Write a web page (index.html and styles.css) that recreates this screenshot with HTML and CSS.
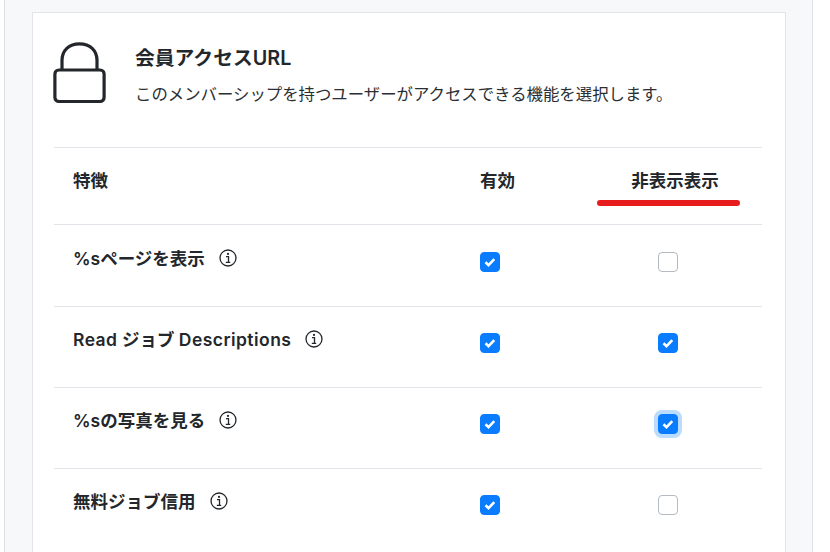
FILE: index.html
```html
<!DOCTYPE html>
<html lang="ja">
<head>
<meta charset="utf-8">
<title>会員アクセスURL</title>
<link rel="stylesheet" href="styles.css">
</head>
<body>
<div class="panel">
  <section class="card">
    <header class="head">
      <svg class="lock" width="54" height="62" viewBox="0 0 54 62" fill="none" stroke="#23272b" stroke-width="3.2">
        <path d="M9 28V18.500C9 8.500 16 1.800 26.500 1.800S44 8.500 44 18.500V28"/>
        <rect x="1.900" y="28" width="49.200" height="31.500" rx="4"/>
      </svg>
      <div class="head-text">
        <h2 class="title">会員アクセスURL</h2>
        <p class="desc">このメンバーシップを持つユーザーがアクセスできる機能を選択します。</p>
      </div>
    </header>
    <div class="table">
      <div class="row row-head">
        <div class="feature">特徴</div>
        <div class="col col-a">有効</div>
        <div class="col col-b"><span class="marked">非表示表示</span></div>
      </div>
      <div class="row row-1">
        <div class="feature">%sページを表示<svg class="info" viewBox="0 0 18 18"><circle cx="9" cy="9" r="8"/><path d="M7 7.700H9.500V13M6.800 13.300H11.200"/><circle class="dot" cx="9" cy="4.900" r="1.100"/></svg></div>
        <div class="col col-a"><span class="cb on"></span></div>
        <div class="col col-b"><span class="cb"></span></div>
      </div>
      <div class="row">
        <div class="feature"><span class="latin">Read</span>&nbsp;ジョブ&nbsp;<span class="latin">Descriptions</span><svg class="info" viewBox="0 0 18 18"><circle cx="9" cy="9" r="8"/><path d="M7 7.700H9.500V13M6.800 13.300H11.200"/><circle class="dot" cx="9" cy="4.900" r="1.100"/></svg></div>
        <div class="col col-a"><span class="cb on"></span></div>
        <div class="col col-b"><span class="cb on"></span></div>
      </div>
      <div class="row">
        <div class="feature">%sの写真を見る<svg class="info" viewBox="0 0 18 18"><circle cx="9" cy="9" r="8"/><path d="M7 7.700H9.500V13M6.800 13.300H11.200"/><circle class="dot" cx="9" cy="4.900" r="1.100"/></svg></div>
        <div class="col col-a"><span class="cb on"></span></div>
        <div class="col col-b"><span class="cb on focus"></span></div>
      </div>
      <div class="row">
        <div class="feature">無料ジョブ信用<svg class="info" viewBox="0 0 18 18"><circle cx="9" cy="9" r="8"/><path d="M7 7.700H9.500V13M6.800 13.300H11.200"/><circle class="dot" cx="9" cy="4.900" r="1.100"/></svg></div>
        <div class="col col-a"><span class="cb on"></span></div>
        <div class="col col-b"><span class="cb"></span></div>
      </div>
    </div>
  </section>
</div>
</body>
</html>
```
FILE: styles.css
```css
html, body {
  margin: 0;
  height: 552px;
  overflow: hidden;
  background: #fff;
}
body {
  font-family: "Inter", "Noto Sans CJK JP", sans-serif;
  color: #23272b;
}
.panel {
  box-sizing: border-box;
  width: 809px;
  height: 552px;
  margin-left: 4px;
  padding: 12px 26px 0 27px;
  background: #f7f8fa;
  border-left: 1px solid #dfe1e7;
  border-right: 1px solid #dfe1e7;
  overflow: hidden;
}
.card {
  box-sizing: border-box;
  height: 700px;
  padding: 29px 23px 0 21px;
  background: #fff;
  border: 1px solid #e1e4e9;
}
.head {
  display: flex;
  align-items: flex-start;
  height: 105px;
  box-sizing: border-box;
}
.lock {
  flex: none;
  margin: 0 0 0 -1px;
}
.head-text {
  margin-left: 28px;
}
.title {
  margin: 0;
  padding-top: 2px;
  font-size: 19.800px;
  line-height: 28px;
  font-weight: 600;
}
.desc {
  margin: 10px 0 0;
  font-size: 16.400px;
  line-height: 24px;
  color: #2b2f33;
}
.row {
  display: flex;
  align-items: flex-start;
  height: 81px;
  box-sizing: border-box;
  padding: 21px 0 0 19px;
  border-top: 1px solid #e1e4e9;
  font-size: 17.500px;
  font-weight: 600;
}
.row-head {
  height: 77px;
  padding-top: 21px;
}
.row-1 {
  height: 82px;
  padding-top: 22px;
}
.latin {
  letter-spacing: 0.450px;
}
.feature {
  flex: 1;
  display: flex;
  align-items: center;
  line-height: 24px;
}
.info {
  width: 18px;
  height: 18px;
  margin: -2px 0 0 14px;
  fill: none;
  stroke: #23272b;
  stroke-width: 1.300;
}
.dot {
  fill: #23272b;
  stroke: none;
}
.col {
  line-height: 24px;
}
.col-a {
  width: 117px;
  flex: none;
}
.col-b {
  width: 142px;
  flex: none;
  text-align: center;
  margin-right: 23px;
}
.marked {
  position: relative;
  display: inline-block;
  left: 7px;
}
.marked::after {
  content: "";
  position: absolute;
  left: -34px;
  right: -21px;
  top: 31px;
  height: 6px;
  border-radius: 3px;
  background: #e71c1c;
}
.cb {
  display: inline-block;
  box-sizing: border-box;
  width: 20px;
  height: 20px;
  margin-top: 5px;
  border: 1px solid #b5bbc3;
  border-radius: 4px;
  background: #fff;
  vertical-align: top;
}
.cb.on {
  border-color: #0a7cff;
  background: #0a7cff url("data:image/svg+xml,%3Csvg xmlns='http://www.w3.org/2000/svg' viewBox='0 0 20 20'%3E%3Cpath d='M5.500 10.300l3 2.800 5.800-6' fill='none' stroke='%23fff' stroke-width='2.600'/%3E%3C/svg%3E") center/20px 20px no-repeat;
}
.cb.focus {
  box-shadow: 0 0 0 4px #bcdcff;
}
```
